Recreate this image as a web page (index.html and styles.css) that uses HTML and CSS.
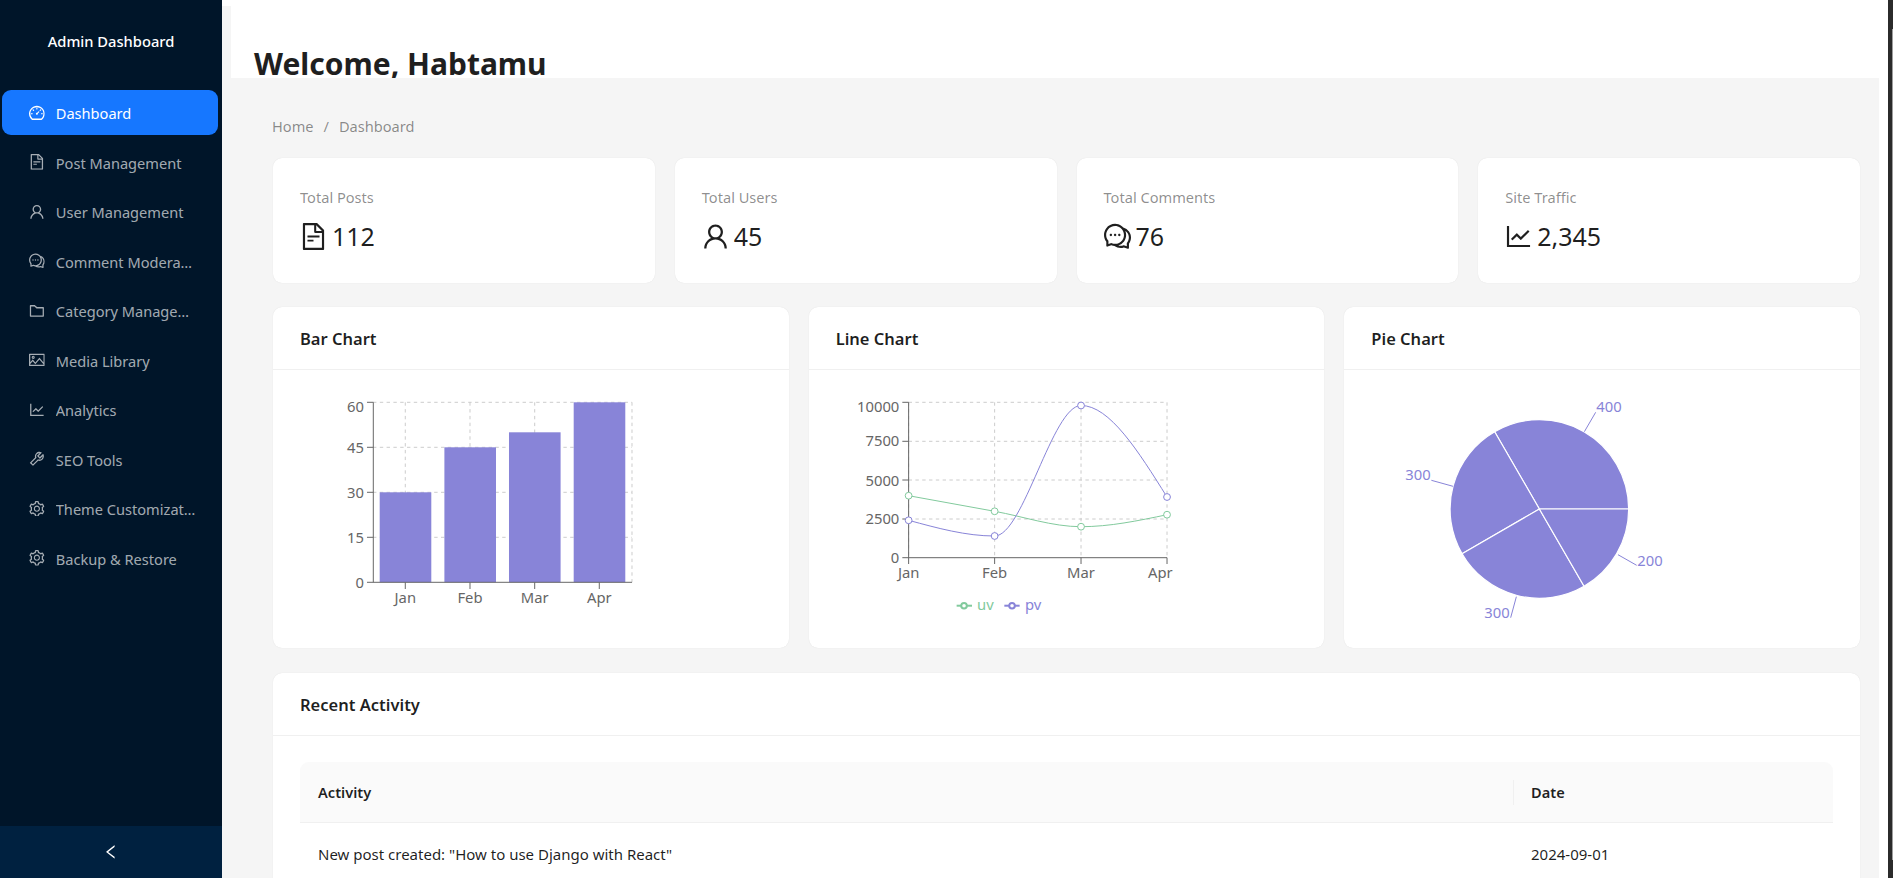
FILE: index.html
```html
<!DOCTYPE html>
<html lang="en">
<head>
<meta charset="utf-8">
<title>Admin Dashboard</title>
<link rel="stylesheet" href="styles.css">
</head>
<body>
<svg class="defs" aria-hidden="true">
  <symbol id="i-dash" viewBox="64 64 896 896"><path d="M924.8 385.6a446.7 446.7 0 00-96-142.4 446.7 446.7 0 00-142.4-96C631.1 123.8 572.5 112 512 112s-119.1 11.8-174.4 35.2a446.7 446.7 0 00-142.4 96 446.7 446.7 0 00-96 142.4C75.8 440.9 64 499.5 64 560c0 132.7 58.3 257.7 159.9 343.1l1.7 1.4c5.8 4.8 13.1 7.5 20.6 7.5h531.7c7.5 0 14.8-2.7 20.6-7.5l1.7-1.4C901.7 817.7 960 692.7 960 560c0-60.5-11.9-119.1-35.2-174.4zM761.4 836H262.6A371.12 371.12 0 01140 560c0-99.4 38.7-192.8 109-263 70.3-70.3 163.7-109 263-109 99.4 0 192.8 38.7 263 109 70.3 70.3 109 163.7 109 263 0 105.6-44.5 205.5-122.6 276zM623.5 421.5a8.03 8.03 0 00-11.3 0L527.7 506c-18.7-5-39.4-.2-54.1 14.5a55.95 55.95 0 000 79.2 55.95 55.95 0 0079.2 0 55.87 55.87 0 0014.5-54.1l84.5-84.5c3.1-3.1 3.1-8.2 0-11.3l-28.3-28.3zM490 320h44c4.4 0 8-3.6 8-8v-80c0-4.4-3.6-8-8-8h-44c-4.4 0-8 3.6-8 8v80c0 4.4 3.6 8 8 8zm260 218v44c0 4.4 3.6 8 8 8h80c4.4 0 8-3.6 8-8v-44c0-4.4-3.6-8-8-8h-80c-4.4 0-8 3.6-8 8zm12.7-197.2l-31.1-31.1a8.03 8.03 0 00-11.3 0l-56.6 56.6a8.03 8.03 0 000 11.3l31.1 31.1c3.1 3.1 8.2 3.1 11.3 0l56.6-56.6c3.1-3.1 3.1-8.2 0-11.3zm-458.6-31.1a8.03 8.03 0 00-11.3 0l-31.1 31.1a8.03 8.03 0 000 11.3l56.6 56.6c3.1 3.1 8.2 3.1 11.3 0l31.1-31.1c3.1-3.1 3.1-8.2 0-11.3l-56.6-56.6zM262 530h-80c-4.4 0-8 3.6-8 8v44c0 4.4 3.6 8 8 8h80c4.4 0 8-3.6 8-8v-44c0-4.4-3.6-8-8-8z"/></symbol>
  <symbol id="i-file" viewBox="64 64 896 896"><path d="M854.6 288.6L639.4 73.4c-6-6-14.1-9.4-22.6-9.4H192c-17.7 0-32 14.3-32 32v832c0 17.7 14.3 32 32 32h640c17.7 0 32-14.3 32-32V311.3c0-8.5-3.4-16.7-9.4-22.7zM790.2 326H602V137.8L790.2 326zm1.8 562H232V136h302v216a42 42 0 0042 42h216v494zM504 618H320c-4.4 0-8 3.6-8 8v48c0 4.4 3.6 8 8 8h184c4.4 0 8-3.6 8-8v-48c0-4.4-3.6-8-8-8zM312 490v48c0 4.4 3.6 8 8 8h384c4.4 0 8-3.6 8-8v-48c0-4.4-3.6-8-8-8H320c-4.4 0-8 3.6-8 8z"/></symbol>
  <symbol id="i-user" viewBox="64 64 896 896"><path d="M858.5 763.6a374 374 0 00-80.6-119.5 375.63 375.63 0 00-119.5-80.6c-.4-.2-.8-.3-1.2-.5C719.5 518 760 444.7 760 362c0-137-111-248-248-248S264 225 264 362c0 82.7 40.5 156 102.8 201.1-.4.2-.8.3-1.2.5-44.8 18.9-85 46-119.5 80.6a375.63 375.63 0 00-80.6 119.5A371.7 371.7 0 00136 901.8a8 8 0 008 8.2h60c4.4 0 7.9-3.5 8-7.8 2-77.2 33-149.5 87.8-204.3 56.7-56.7 132-87.9 212.2-87.9s155.5 31.2 212.2 87.9C779 752.7 810 825 812 902.2c.1 4.4 3.6 7.8 8 7.8h60a8 8 0 008-8.2c-1-47.8-10.9-94.3-29.5-138.2zM512 534c-45.9 0-89.1-17.9-121.6-50.4S340 407.9 340 362c0-45.9 17.9-89.1 50.4-121.6S466.1 190 512 190s89.1 17.9 121.6 50.4S684 316.1 684 362c0 45.9-17.9 89.1-50.4 121.6S557.9 534 512 534z"/></symbol>
  <symbol id="i-comment" viewBox="64 64 896 896"><path d="M573 421c-23.1 0-41 17.9-41 40s17.9 40 41 40c21.1 0 39-17.9 39-40s-17.9-40-39-40zm-280 0c-23.1 0-41 17.9-41 40s17.9 40 41 40c21.1 0 39-17.9 39-40s-17.9-40-39-40z"/><path d="M894 345a343.92 343.92 0 00-189-130v.1c-17.1-19-36.4-36.5-58-52.1-163.7-119-393.5-82.7-513 81-96.3 133-92.2 311.9 6 439l.8 132.6c0 3.2.5 6.4 1.5 9.4a31.95 31.95 0 0040.1 20.9L309 806c33.5 11.9 68.1 18.7 102.5 20.6l-.5.4c89.1 64.9 205.9 84.4 313 49l127.1 41.4c3.2 1 6.5 1.6 9.9 1.6 17.7 0 32-14.3 32-32V753c88.1-119.6 90.4-284.9 1-408zM323 735l-12-5-99 31-1-104-8-9c-84.6-103.2-90.2-251.9-11-361 96.4-132.2 281.2-161.4 413-66 132.2 96.1 161.5 280.6 66 412-80.1 109.9-223.5 150.5-348 102zm505-17l-8 10 1 104-98-33-12 5c-56 20.8-115.7 22.5-171 7l-.2-.1A367.31 367.31 0 00729 676c76.4-105.3 88.8-237.6 44.4-350.4l.6.4c23 16.5 44.1 37.1 62 62 72.6 99.6 68.5 235.2-8 330z"/><path d="M433 421c-23.1 0-41 17.9-41 40s17.9 40 41 40c21.1 0 39-17.9 39-40s-17.9-40-39-40z"/></symbol>
  <symbol id="i-folder" viewBox="64 64 896 896"><path d="M880 298.4H521L403.7 186.2a8.15 8.15 0 00-5.5-2.2H144c-17.7 0-32 14.3-32 32v592c0 17.7 14.3 32 32 32h736c17.7 0 32-14.3 32-32V330.4c0-17.7-14.3-32-32-32zM840 768H184V256h188.5l119.6 114.4H840V768z"/></symbol>
  <symbol id="i-picture" viewBox="64 64 896 896"><path d="M928 160H96c-17.7 0-32 14.3-32 32v640c0 17.7 14.3 32 32 32h832c17.7 0 32-14.3 32-32V192c0-17.7-14.3-32-32-32zm-40 632H136v-39.9l138.5-164.3 150.1 178L658.1 489 888 761.6V792zm0-129.8L664.2 396.8c-3.2-3.8-9-3.8-12.2 0L424.6 666.4l-144-170.7c-3.2-3.8-9-3.8-12.2 0L136 652.7V232h752v430.2zM304 456a88 88 0 100-176 88 88 0 000 176zm0-116c15.5 0 28 12.5 28 28s-12.5 28-28 28-28-12.5-28-28 12.5-28 28-28z"/></symbol>
  <symbol id="i-line" viewBox="64 64 896 896"><path d="M888 792H200V168c0-4.4-3.6-8-8-8h-56c-4.4 0-8 3.6-8 8v688c0 4.4 3.6 8 8 8h752c4.4 0 8-3.6 8-8v-56c0-4.4-3.6-8-8-8zM305.8 637.7c3.1 3.1 8.1 3.1 11.3 0l138.3-137.6L583 628.5c3.1 3.1 8.2 3.1 11.3 0l275.4-275.3c3.1-3.1 3.1-8.2 0-11.3l-39.6-39.6a8.03 8.03 0 00-11.3 0l-230 229.9L461.4 404a8.03 8.03 0 00-11.3 0L266.3 586.7a8.03 8.03 0 000 11.4l39.5 39.6z"/></symbol>
  <symbol id="i-tool" viewBox="64 64 896 896"><path d="M876.6 239.5c-.5-.9-1.2-1.8-2-2.5-5-5-13.1-5-18.1 0L684.2 409.3l-67.9-67.9L788.7 169c.8-.8 1.4-1.6 2-2.5 3.6-6.1 1.6-13.9-4.5-17.5-98.2-58-226.8-44.7-311.3 39.7-67 67-89.2 162-66.5 247.4l-293 293c-3 3-2.8 7.9.3 11l169.7 169.7c3.1 3.1 8.1 3.3 11 .3l292.9-292.9c85.5 22.8 180.5.7 247.6-66.4 84.4-84.5 97.7-213.1 39.7-311.3zM786 499.8c-58.1 58.1-145.3 69.3-214.6 33.6l-8.8 8.8-.1-.1-274 274.1-79.2-79.2 230.1-230.1s0 .1.1.1l52.8-52.8c-35.7-69.3-24.5-156.5 33.6-214.6a184.2 184.2 0 01144-53.5L537 318.9a32.05 32.05 0 000 45.3l124.5 124.5a32.05 32.05 0 0045.3 0l132.8-132.8c3.7 51.8-14.4 104.8-53.6 143.9z"/></symbol>
  <symbol id="i-setting" viewBox="64 64 896 896"><path d="M924.8 625.7l-65.5-56c3.1-19 4.7-38.4 4.7-57.8s-1.6-38.8-4.7-57.8l65.5-56a32.03 32.03 0 009.3-35.2l-.9-2.6a443.74 443.74 0 00-79.7-137.9l-1.8-2.1a32.12 32.12 0 00-35.1-9.5l-81.3 28.9c-30-24.6-63.5-44-99.7-57.6l-15.7-85a32.05 32.05 0 00-25.8-25.7l-2.7-.5c-52.1-9.4-106.9-9.4-159 0l-2.7.5a32.05 32.05 0 00-25.8 25.7l-15.8 85.4a351.86 351.86 0 00-99 57.4l-81.9-29.1a32 32 0 00-35.1 9.5l-1.8 2.1a446.02 446.02 0 00-79.7 137.9l-.9 2.6c-4.5 12.5-.8 26.5 9.3 35.2l66.3 56.6c-3.1 18.8-4.6 38-4.6 57.1 0 19.2 1.5 38.4 4.6 57.1L99 625.5a32.03 32.03 0 00-9.3 35.2l.9 2.6c18.1 50.4 44.9 96.9 79.7 137.9l1.8 2.1a32.12 32.12 0 0035.1 9.5l81.9-29.1c29.8 24.5 63.1 43.9 99 57.4l15.8 85.4a32.05 32.05 0 0025.8 25.7l2.7.5a449.4 449.4 0 00159 0l2.7-.5a32.05 32.05 0 0025.8-25.7l15.7-85a350 350 0 0099.7-57.6l81.3 28.9a32 32 0 0035.1-9.5l1.8-2.1c34.8-41.1 61.6-87.5 79.7-137.9l.9-2.6c4.5-12.3.8-26.3-9.3-35zM788.3 465.9c2.5 15.1 3.8 30.6 3.8 46.1s-1.3 31-3.8 46.1l-6.6 40.1 74.7 63.9a370.03 370.03 0 01-42.6 73.6L721 702.8l-31.4 25.8c-23.9 19.6-50.5 35-79.3 45.8l-38.1 14.3-17.9 97a377.5 377.5 0 01-85 0l-17.9-97.2-37.8-14.5c-28.5-10.8-55-26.2-78.7-45.7l-31.4-25.9-93.4 33.2c-17-22.9-31.2-47.6-42.6-73.6l75.5-64.5-6.5-40c-2.4-14.9-3.7-30.3-3.7-45.5 0-15.3 1.2-30.6 3.7-45.5l6.5-40-75.5-64.5c11.3-26.1 25.6-50.7 42.6-73.6l93.4 33.2 31.4-25.9c23.7-19.5 50.2-34.9 78.7-45.7l37.9-14.3 17.9-97.2c28.1-3.2 56.8-3.2 85 0l17.9 97 38.1 14.3c28.7 10.8 55.4 26.2 79.3 45.8l31.4 25.8 92.8-32.9c17 22.9 31.2 47.6 42.6 73.6L781.8 426l6.5 39.9zM512 326c-97.2 0-176 78.8-176 176s78.8 176 176 176 176-78.8 176-176-78.8-176-176-176zm79.2 255.2A111.6 111.6 0 01512 614c-29.9 0-58-11.7-79.2-32.8A111.6 111.6 0 01400 502c0-29.9 11.7-58 32.8-79.2C454 401.6 482.1 390 512 390c29.9 0 58 11.6 79.2 32.8A111.6 111.6 0 01624 502c0 29.9-11.7 58-32.8 79.2z"/></symbol>
  <symbol id="i-left" viewBox="64 64 896 896"><path d="M724 218.3V141c0-6.7-7.7-10.4-12.9-6.3L260.3 486.8a31.86 31.86 0 000 50.3l450.8 352.1c5.3 4.1 12.9.4 12.9-6.3v-77.3c0-4.9-2.3-9.6-6.1-12.6l-360-281 360-281.1c3.8-3 6.1-7.7 6.1-12.6z"/></symbol>
</svg>

<div class="app">
  <aside class="sider">
    <div class="logo">Admin Dashboard</div>
    <nav class="menu">
      <a class="menu-item active"><svg class="mi"><use href="#i-dash"/></svg><span class="mt">Dashboard</span></a>
      <a class="menu-item"><svg class="mi"><use href="#i-file"/></svg><span class="mt">Post Management</span></a>
      <a class="menu-item"><svg class="mi"><use href="#i-user"/></svg><span class="mt">User Management</span></a>
      <a class="menu-item"><svg class="mi"><use href="#i-comment"/></svg><span class="mt">Comment Moderation</span></a>
      <a class="menu-item"><svg class="mi"><use href="#i-folder"/></svg><span class="mt">Category Management</span></a>
      <a class="menu-item"><svg class="mi"><use href="#i-picture"/></svg><span class="mt">Media Library</span></a>
      <a class="menu-item"><svg class="mi"><use href="#i-line"/></svg><span class="mt">Analytics</span></a>
      <a class="menu-item"><svg class="mi"><use href="#i-tool"/></svg><span class="mt">SEO Tools</span></a>
      <a class="menu-item"><svg class="mi"><use href="#i-setting"/></svg><span class="mt">Theme Customization</span></a>
      <a class="menu-item"><svg class="mi"><use href="#i-setting"/></svg><span class="mt">Backup &amp; Restore</span></a>
    </nav>
    <div class="trigger"><svg class="trigger-icon"><use href="#i-left"/></svg></div>
  </aside>

  <div class="main">
    <div class="layout">
      <header class="header"><h1 class="title">Welcome, Habtamu</h1></header>
      <main class="content">
        <div class="crumbs"><span>Home</span><span class="sep">/</span><span>Dashboard</span></div>

        <section class="stats">
          <div class="card stat">
            <div class="stat-label">Total Posts</div>
            <div class="stat-value"><svg class="si"><use href="#i-file"/></svg><span>112</span></div>
          </div>
          <div class="card stat">
            <div class="stat-label">Total Users</div>
            <div class="stat-value"><svg class="si"><use href="#i-user"/></svg><span>45</span></div>
          </div>
          <div class="card stat">
            <div class="stat-label">Total Comments</div>
            <div class="stat-value"><svg class="si"><use href="#i-comment"/></svg><span>76</span></div>
          </div>
          <div class="card stat">
            <div class="stat-label">Site Traffic</div>
            <div class="stat-value"><svg class="si"><use href="#i-line"/></svg><span>2,345</span></div>
          </div>
        </section>

        <section class="charts">
          <div class="card">
            <div class="card-head">Bar Chart</div>
            <svg class="chart" viewBox="273 370 515.67 278">
              <g class="grid">
                <path d="M373 402.3H632M373 447.3H632M373 492.3H632M373 537.3H632"/>
                <path d="M405.3 402.3V582.3M470 402.3V582.3M534.7 402.3V582.3M599.3 402.3V582.3M632 402.3V582.3"/>
              </g>
              <g class="bars">
                <rect x="379.7" y="492.3" width="51.6" height="90"/>
                <rect x="444.4" y="447.3" width="51.6" height="135"/>
                <rect x="509" y="432.3" width="51.6" height="150"/>
                <rect x="573.7" y="402.3" width="51.6" height="180"/>
              </g>
              <path class="axis" d="M373.3 402.3V582.3M367 402.3H373.3M367 447.3H373.3M367 492.3H373.3M367 537.3H373.3M367 582.3H632M405.3 582.3V589M470 582.3V589M534.7 582.3V589M599.3 582.3V589"/>
              <g class="tick end">
                <text x="364" y="412">60</text>
                <text x="364" y="453">45</text>
                <text x="364" y="498">30</text>
                <text x="364" y="543">15</text>
                <text x="364" y="588">0</text>
              </g>
              <g class="tick mid">
                <text x="405.3" y="603">Jan</text>
                <text x="470" y="603">Feb</text>
                <text x="534.7" y="603">Mar</text>
                <text x="599.3" y="603">Apr</text>
              </g>
            </svg>
          </div>

          <div class="card">
            <div class="card-head">Line Chart</div>
            <svg class="chart" viewBox="808.67 370 515.67 278">
              <g class="grid">
                <path d="M908.3 402.3H1166.7M908.3 441.3H1166.7M908.3 480H1166.7M908.3 519H1166.7"/>
                <path d="M908.3 402.3V557.7M994.3 402.3V557.7M1080.7 402.3V557.7M1166.7 402.3V557.7"/>
              </g>
              <path class="axis" d="M908.3 402.3V557.7M902 402.3H908.3M902 441.3H908.3M902 480H908.3M902 519H908.3M902 557.7H1166.7M908.3 557.7V564M994.3 557.7V564M1080.7 557.7V564M1166.7 557.7V564"/>
              <g class="tick end">
                <text x="899" y="411.7">10000</text>
                <text x="899" y="446">7500</text>
                <text x="899" y="486">5000</text>
                <text x="899" y="524.3">2500</text>
                <text x="899" y="562.7">0</text>
              </g>
              <g class="tick mid">
                <text x="908.3" y="578">Jan</text>
                <text x="994.3" y="578">Feb</text>
                <text x="1080.7" y="578">Mar</text>
                <text x="1160" y="578">Apr</text>
              </g>
              <path class="uv" d="M908.3 495.7C937 500.9 965.6 506.1 994.3 511.3C1023 516.5 1052 526.7 1080.7 526.7C1109.4 526.7 1138 520.7 1166.7 514.7"/>
              <path class="pv" d="M908.3 520.3C937 528.1 965.6 536 994.3 536C1023 536 1052 405.5 1080.7 405.5C1109.4 405.5 1138 451.3 1166.7 497"/>
              <g class="uv dot">
                <circle cx="908.3" cy="495.7" r="3.4"/><circle cx="994.3" cy="511.3" r="3.4"/><circle cx="1080.7" cy="526.7" r="3.4"/><circle cx="1166.7" cy="514.7" r="3.4"/>
              </g>
              <g class="pv dot">
                <circle cx="908.3" cy="520.3" r="3.4"/><circle cx="994.3" cy="536" r="3.4"/><circle cx="1080.7" cy="405.5" r="3.4"/><circle cx="1166.7" cy="497" r="3.4"/>
              </g>
              <path class="uv thick" d="M956.3 605.7H971.7"/><circle class="uv dot-l" cx="963.7" cy="605.7" r="2.8"/>
              <text class="legend-uv" x="976.7" y="609.5">uv</text>
              <path class="pv thick" d="M1004 605.7H1019.3"/><circle class="pv dot-l" cx="1011.7" cy="605.7" r="2.8"/>
              <text class="legend-pv" x="1024.7" y="609.5">pv</text>
            </svg>
          </div>

          <div class="card">
            <div class="card-head">Pie Chart</div>
            <svg class="chart" viewBox="1344.33 370 515.67 278">
              <g class="pie">
                <path d="M1539.7 509L1629 509A89.3 89.3 0 0 0 1495 431.7Z"/>
                <path d="M1539.7 509L1495 431.7A89.3 89.3 0 0 0 1462.4 553.7Z"/>
                <path d="M1539.7 509L1462.4 553.7A89.3 89.3 0 0 0 1584.4 586.3Z"/>
                <path d="M1539.7 509L1584.4 586.3A89.3 89.3 0 0 0 1629 509Z"/>
              </g>
              <path class="pie-line" d="M1584.7 431.7L1596 412.3M1453.3 486.3L1431.7 480.3M1516.7 596.7L1511 617.7M1618.3 554.7L1637 565.3"/>
              <g class="pie-label">
                <text x="1596.7" y="411.7">400</text>
                <text x="1431" y="480" class="to-end">300</text>
                <text x="1510" y="618" class="to-end">300</text>
                <text x="1637.7" y="565.7">200</text>
              </g>
            </svg>
          </div>
        </section>

        <section class="card recent">
          <div class="card-head">Recent Activity</div>
          <div class="recent-body">
            <table class="table">
              <thead>
                <tr><th class="col-a">Activity</th><th class="col-d">Date</th></tr>
              </thead>
              <tbody>
                <tr><td>New post created: "How to use Django with React"</td><td>2024-09-01</td></tr>
              </tbody>
            </table>
          </div>
        </section>
      </main>
    </div>
  </div>
  <div class="strip"><div class="thumb"></div></div>
</div>
</body>
</html>
```

FILE: styles.css
```css
* { box-sizing: border-box; }
html, body { margin: 0; height: 100%; overflow: hidden; }
body {
  font-family: "Noto Sans", "Open Sans", sans-serif;
  font-size: 14.6px;
  color: rgba(0, 0, 0, 0.88);
  background: #fff;
}
.defs { width: 0; height: 0; position: absolute; }
.app { display: flex; height: 878px; }

/* sidebar */
.sider {
  width: 222px;
  flex: none;
  background: #001529;
  display: flex;
  flex-direction: column;
}
.logo {
  height: 90px;
  padding-top: 30px;
  line-height: 22px;
  text-align: center;
  color: #fff;
  font-size: 14.7px;
  font-weight: 500;
}
.menu { display: flex; flex-direction: column; gap: 4.5px; padding: 0 4px 0 2px; }
.menu-item {
  height: 45px;
  border-radius: 9px;
  display: flex;
  align-items: center;
  padding-left: 27px;
  gap: 11px;
  color: rgba(255, 255, 255, 0.65);
}
.menu-item.active { background: #1677ff; color: #fff; }
.mi { width: 15.75px; height: 15.75px; flex: none; fill: currentColor; }
.mt { width: 141px; padding-top: 1px; overflow: hidden; white-space: nowrap; text-overflow: ellipsis; }
.trigger {
  margin-top: auto;
  height: 52px;
  background: #002140;
  display: flex;
  align-items: center;
  justify-content: center;
  color: #fff;
}
.trigger-icon { width: 15.75px; height: 15.75px; fill: currentColor; }

/* main */
.main { flex: 1; min-width: 0; padding: 6px 9px 0 0; background: #fff; }
.layout { height: 100%; background: #f5f5f5; overflow: hidden; }
.header { margin-left: 9px; height: 72px; background: #fff; overflow: hidden; padding-left: 23px; }
.title { margin: 0; padding-top: 33px; font-size: 30px; line-height: 50px; font-weight: 700; color: #1f1f1f; }
.content { padding: 37px 19px 0 51px; }
.crumbs { height: 22px; line-height: 22px; display: flex; gap: 9px; color: rgba(0, 0, 0, 0.45); margin-left: -1px; }
.sep { padding: 0 1px; }

/* cards */
.card { background: #fff; border-radius: 9px; box-shadow: 0 0 1px rgba(0, 0, 0, 0.12); }
.stats { margin-top: 21px; display: grid; grid-template-columns: repeat(4, 1fr); gap: 20px; }
.stat { height: 125px; padding: 27px 27px 0; }
.stat-label { line-height: 24px; color: rgba(0, 0, 0, 0.45); }
.stat-value { margin-top: 9px; display: flex; align-items: center; gap: 5px; font-size: 25px; line-height: 36px; color: rgba(0, 0, 0, 0.88); }
.si { width: 27px; height: 27px; fill: currentColor; flex: none; }

.charts { margin-top: 24px; display: grid; grid-template-columns: repeat(3, 1fr); gap: 20px; }
.card-head {
  height: 63px;
  border-bottom: 1px solid #f0f0f0;
  padding: 0 27px;
  display: flex;
  align-items: center;
  font-size: 16.5px;
  font-weight: 600;
}
.chart { display: block; width: 100%; height: 278px; }

.grid path { fill: none; stroke: #ccc; stroke-dasharray: 3.4 3.4; }
.axis { fill: none; stroke: #666; }
.bars rect { fill: #8884d8; }
.tick text { font-size: 14.8px; fill: #666; }
.end text { text-anchor: end; }
.mid text { text-anchor: middle; }
.uv { fill: none; stroke: #82ca9d; }
.pv { fill: none; stroke: #8884d8; }
.dot circle { fill: #fff; }
.thick { stroke-width: 2; }
.dot-l { fill: #fff; stroke-width: 2; }
.legend-uv { font-size: 14.8px; fill: #82ca9d; }
.legend-pv { font-size: 14.8px; fill: #8884d8; }
.pie path { fill: #8884d8; stroke: #fff; stroke-width: 1.2; }
.pie-line { fill: none; stroke: #8884d8; }
.pie-label text { font-size: 14.8px; fill: #8884d8; }
.pie-label .to-end { text-anchor: end; }

/* recent */
.recent { margin-top: 25px; height: 260px; }
.recent-body { padding: 26px 27px 0; }
.table { width: 100%; border-collapse: separate; border-spacing: 0; table-layout: fixed; }
.table th {
  height: 61px;
  padding: 0 18px;
  text-align: left;
  font-weight: 600;
  background: #fafafa;
  border-bottom: 1px solid #f0f0f0;
  position: relative;
}
.table .col-a { border-top-left-radius: 9px; }
.table .col-d { width: 320px; border-top-right-radius: 9px; }
.col-d::before {
  content: "";
  position: absolute;
  left: 0;
  top: 18px;
  height: 25px;
  width: 1px;
  background: #f0f0f0;
}
.table td { height: 63px; padding: 0 18px; font-size: 15px; border-bottom: 1px solid #f0f0f0; }

/* clipped window edge on the right */
.strip { width: 5px; flex: none; background: #2b2b2b; padding: 29px 0 18px 4px; }
.thumb { width: 1px; height: 100%; background: #9e9e9e; }
```
